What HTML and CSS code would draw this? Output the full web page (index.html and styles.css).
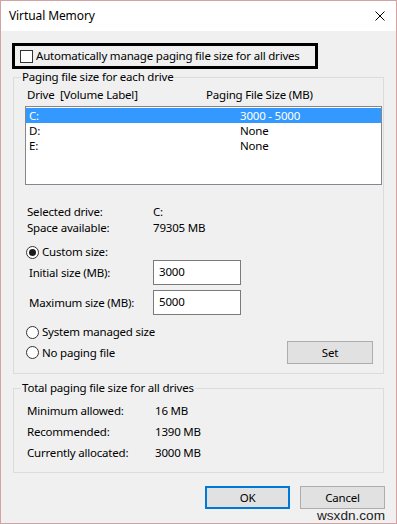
FILE: index.html
```html
<!DOCTYPE html>
<html lang="en">
<head>
<meta charset="utf-8">
<title>Virtual Memory</title>
<link rel="stylesheet" href="styles.css">
</head>
<body>
<div class="window">
  <div class="titlebar">
    <span class="title">Virtual Memory</span>
    <svg class="close" width="10" height="10" viewBox="0 0 10 10" aria-label="Close">
      <path d="M0.5 0.5 L9.5 9.5 M9.5 0.5 L0.5 9.5" stroke="#000" stroke-width="1" fill="none"/>
    </svg>
  </div>
  <div class="content">
    <div class="auto-frame">
      <span class="checkbox"></span>
      <span class="auto-label">Automatically manage paging file size for all drives</span>
    </div>

    <fieldset class="group group-drives">
      <legend>Paging file size for each drive</legend>
      <div class="list-head">
        <span class="pre">Drive  [Volume Label]</span>
        <span>Paging File Size (MB)</span>
      </div>
      <div class="listbox">
        <div class="row selected"><span>C:</span><span>3000 - 5000</span></div>
        <div class="row"><span>D:</span><span>None</span></div>
        <div class="row"><span>E:</span><span>None</span></div>
      </div>
      <div class="info">
        <span>Selected drive:</span><span>C:</span>
        <span>Space available:</span><span>79305 MB</span>
      </div>
      <div class="radio-row first-radio">
        <span class="radio checked"></span><span>Custom size:</span>
      </div>
      <div class="field-row">
        <span class="field-label">Initial size (MB):</span>
        <div class="textbox">3000</div>
      </div>
      <div class="field-row second-field">
        <span class="field-label">Maximum size (MB):</span>
        <div class="textbox">5000</div>
      </div>
      <div class="radio-row system-radio">
        <span class="radio"></span><span>System managed size</span>
      </div>
      <div class="last-row">
        <div class="radio-row inline">
          <span class="radio"></span><span>No paging file</span>
        </div>
        <div class="btn set-btn">Set</div>
      </div>
    </fieldset>

    <fieldset class="group group-total">
      <legend>Total paging file size for all drives</legend>
      <div class="totals">
        <span>Minimum allowed:</span><span>16 MB</span>
        <span>Recommended:</span><span>1390 MB</span>
        <span>Currently allocated:</span><span>3000 MB</span>
      </div>
    </fieldset>

    <div class="buttons">
      <div class="btn btn-default">OK</div>
      <div class="btn">Cancel</div>
    </div>
  </div>
  <span class="watermark">wsxdn.com</span>
</div>
</body>
</html>
```

FILE: styles.css
```css
* { box-sizing: border-box; }
html, body { margin: 0; padding: 0; }
body {
  font-family: "Noto Sans", "Open Sans", sans-serif;
  font-size: 11.5px;
  letter-spacing: -0.2px;
  color: #000;
  background: #fff;
}
.window {
  position: relative;
  width: 397px;
  height: 524px;
  border: 1px solid #d3a3a3;
  background: #f0f0f0;
}
.titlebar {
  height: 30px;
  background: #fff;
  display: flex;
  align-items: center;
  justify-content: space-between;
  padding: 0 11px 0 8px;
}
.title { line-height: 30px; font-size: 12px; letter-spacing: -0.1px; }
.close { display: block; }

.content { padding-left: 12px; }

.auto-frame {
  margin: 12px 0 0 -1px;
  width: 306px;
  height: 26px;
  border: 3px solid #000;
  display: flex;
  align-items: center;
  gap: 3px;
  padding-left: 5px;
}
.checkbox {
  width: 13px;
  height: 13px;
  border: 1px solid #333;
  background: #fff;
  flex: none;
}
.auto-label { line-height: 16px; white-space: nowrap; }

.group {
  margin: 0;
  padding: 0;
  border: 1px solid #dcdcdc;
  width: 371px;
  min-width: 0;
}
.group legend {
  margin-left: 7px;
  padding: 0 1px;
  line-height: 16px;
}
.group-drives { padding-bottom: 9px; }

.pre { white-space: pre; }
.list-head {
  margin-top: 2px;
  padding-left: 13px;
  display: grid;
  grid-template-columns: 179px auto;
  line-height: 16px;
}
.listbox {
  margin: 3px 0 0 11px;
  width: 357px;
  height: 79px;
  border: 1px solid #828790;
  background: #fff;
  padding-top: 1px;
}
.row {
  display: grid;
  grid-template-columns: 211px auto;
  height: 15px;
  line-height: 15px;
  padding-left: 3px;
}
.row.selected { background: #3399ff; color: #fff; }

.info {
  margin-top: 19px;
  padding-left: 13px;
  display: grid;
  grid-template-columns: 126px auto;
  line-height: 16px;
}

.radio-row {
  display: flex;
  align-items: center;
  gap: 3px;
  height: 16px;
  line-height: 16px;
  padding-left: 12px;
}
.first-radio { margin-top: 8px; }
.system-radio { margin-top: 9px; }
.radio {
  width: 13px;
  height: 13px;
  border: 1px solid #333;
  border-radius: 50%;
  background: #fff;
  flex: none;
  display: grid;
  place-items: center;
}
.radio.checked::after {
  content: "";
  width: 7px;
  height: 7px;
  border-radius: 50%;
  background: #1a1a1a;
}

.field-row {
  display: flex;
  align-items: center;
  padding-left: 15px;
  height: 25px;
}
.second-field { margin-top: 5px; }
.field-label { width: 124px; }
.textbox {
  width: 88px;
  height: 25px;
  border: 1px solid #7a7a7a;
  background: #fff;
  padding: 0 0 2px 5px;
  display: flex;
  align-items: center;
}

.last-row {
  margin-top: 1px;
  height: 23px;
  display: flex;
  align-items: center;
  justify-content: space-between;
  padding-right: 10px;
}

.btn {
  width: 85px;
  height: 23px;
  border: 1px solid #adadad;
  background: #e1e1e1;
  display: flex;
  align-items: center;
  justify-content: center;
}
.set-btn { width: 86px; }
.btn-default { border: 2px solid #0078d7; }

.group-total {
  margin-top: 6px;
  padding-bottom: 9px;
}
.totals {
  margin-top: 4px;
  padding-left: 13px;
  display: grid;
  grid-template-columns: 128px auto;
  grid-auto-rows: 21px;
  line-height: 21px;
}

.buttons {
  margin-top: 13px;
  display: flex;
  justify-content: flex-end;
  gap: 10px;
  padding-right: 11px;
}

.watermark {
  position: absolute;
  right: 11px;
  bottom: 1px;
  font-family: "Liberation Sans", Arial, sans-serif;
  font-size: 13.6px;
  letter-spacing: 0;
  line-height: 13px;
  color: #222;
}
```
